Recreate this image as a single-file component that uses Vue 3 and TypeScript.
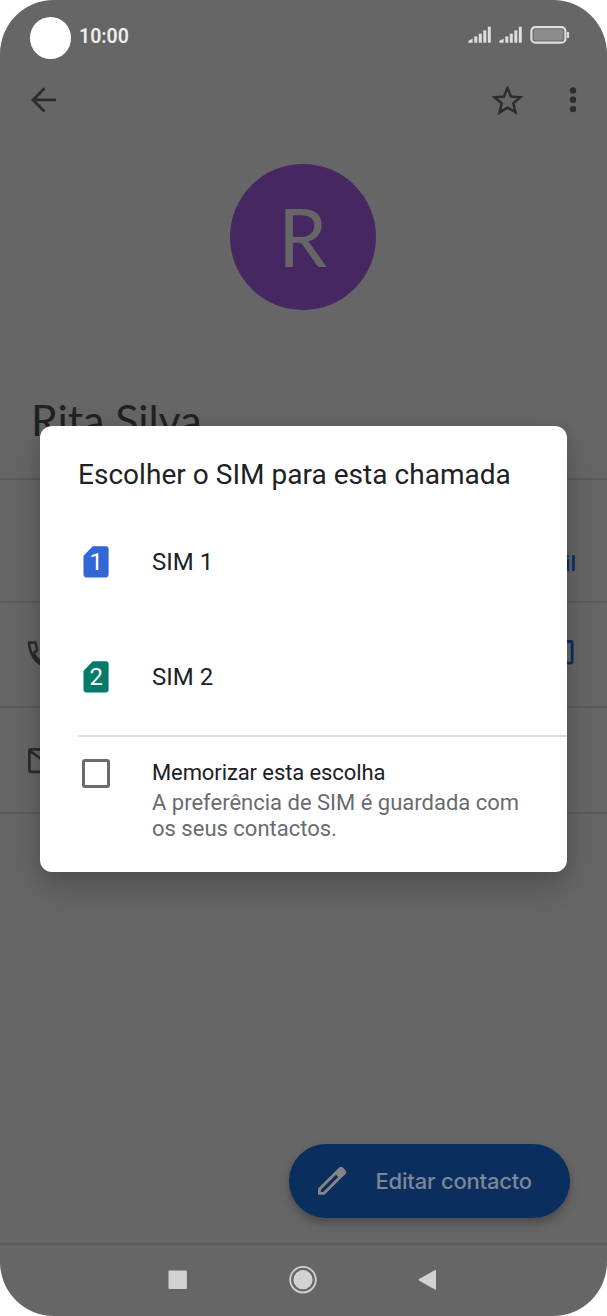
<script setup lang="ts">
interface SimOption {
  id: number
  color: string
}

const sims: SimOption[] = [
  { id: 1, color: '#3267d6' },
  { id: 2, color: '#047b69' },
]
const signalBars: number[] = [3.5, 6.3, 9, 12.3, 16]
</script>

<template>
  <div class="phone">
    <header class="status">
      <span class="camera"></span>
      <span class="clock">10:00</span>
      <svg v-for="n in 2" :key="n" class="signal" width="24" height="17" viewBox="0 0 24 17">
        <path d="M0.3 16.7V15L4.6 12.6V16.7Z" />
        <rect v-for="(h, i) in signalBars.slice(1)" :key="i" :x="6.3 + i * 4.5" :y="16.7 - h" width="3" :height="h" />
      </svg>
      <svg class="battery" width="40" height="18" viewBox="0 0 40 18">
        <rect x="1.4" y="1.1" width="34" height="15.6" rx="4" fill="none" stroke="#dedede" stroke-width="2.2" />
        <rect x="3.7" y="3.3" width="29.5" height="11.2" rx="1.5" fill="#8c8c8c" />
        <path d="M37 6h1.2q.9 0 .9 1v4q0 1-.9 1H37z" fill="#dedede" />
      </svg>
    </header>

    <nav class="appbar">
      <svg class="back" width="26" height="26" viewBox="0 0 26 26">
        <path d="M25 12.9H2M13.5 1.3L2 12.9L13.5 24.5" fill="none" stroke="#2b2c2d" stroke-width="2.8" />
      </svg>
      <svg class="star" width="31" height="30" viewBox="0 0 31 30">
        <path d="M15.5 1.9L19 10.5L28.4 11.3L21.3 17.4L23.5 26.4L15.5 21.6L7.5 26.4L9.7 17.4L2.6 11.3L12 10.5Z" fill="none" stroke="#2b2c2d" stroke-width="2.5" />
      </svg>
      <svg class="more" width="8" height="26" viewBox="0 0 8 26">
        <circle cx="4" cy="3.5" r="3.2" /><circle cx="4" cy="12.8" r="3.2" /><circle cx="4" cy="22.1" r="3.2" />
      </svg>
    </nav>

    <main class="contact">
      <div class="avatar"><span>R</span></div>
      <h1 class="name">Rita Silva</h1>
      <section class="actions"><span>E-mail</span></section>
      <section class="row phone-row">
        <svg width="30" height="30" viewBox="0 0 30 30">
          <path d="M1.8 2.5H8.5L10.2 10L6.6 13.4Q10 20 16.8 23.4L20.4 19.8L27.5 21.5V28Q4.5 27 1.8 2.5ZM6.6 13.4L10 10M16.8 23.4L20.4 19.8" fill="none" stroke="#2b2c2d" stroke-width="2.5" stroke-linejoin="round" />
        </svg>
        <svg width="28" height="25" viewBox="0 0 28 25">
          <rect x="1.5" y="1.5" width="24.7" height="21.6" rx="1.8" fill="none" stroke="#0d2f61" stroke-width="2.8" />
        </svg>
      </section>
      <section class="row mail-row">
        <svg width="31" height="26" viewBox="0 0 31 26">
          <path d="M1.4 2.6Q1.4 1.4 2.6 1.4H28Q29.2 1.4 29.2 2.6V22.6Q29.2 23.8 28 23.8H2.6Q1.4 23.8 1.4 22.6ZM2 3L15.3 12.5L28.6 3" fill="none" stroke="#2b2c2d" stroke-width="2.7" />
        </svg>
      </section>
      <button class="edit" type="button">
        <svg width="30" height="30" viewBox="0 0 30 30">
          <path fill-rule="evenodd" d="M1 22.6L22.2 1.5Q24 .1 25.8 1.5L28.7 4.4Q30 6.1 28.7 7.7L7.5 28.8H1ZM3.9 23.8V26H6.1L21.2 10.9L19 8.7Z" />
        </svg>
        <span>Editar contacto</span>
      </button>
    </main>

    <footer class="navbar">
      <svg width="270" height="28" viewBox="0 0 270 28">
        <rect x=".5" y="4.5" width="18.4" height="18.5" rx="1" />
        <circle cx="135" cy="13.7" r="12.8" fill="none" stroke="#d2d2d2" stroke-width="1.8" />
        <circle cx="135" cy="13.7" r="9.6" />
        <path d="M251 13.1L266.8 4.2Q268 3.7 268 5V22.8Q268 24.1 266.8 23.4L251 14.5Q250.2 13.8 251 13.1Z" />
      </svg>
    </footer>

    <div class="dialog" role="dialog">
      <h2>Escolher o SIM para esta chamada</h2>
      <div v-for="sim in sims" :key="sim.id" class="sim">
        <svg width="26" height="32" viewBox="0 0 26 32">
          <path d="M9.8 .3H22.9Q25.6 .3 25.6 3V28.6Q25.6 31.4 22.9 31.4H3.3Q.5 31.4 .5 28.6V9.8Z" :fill="sim.color" />
          <text x="13.3" y="24.4" text-anchor="middle">{{ sim.id }}</text>
        </svg>
        <span>SIM {{ sim.id }}</span>
      </div>
      <div class="remember">
        <span class="checkbox"></span>
        <div>
          <p class="choice">Memorizar esta escolha</p>
          <p class="hint">A preferência de SIM é guardada com<br />os seus contactos.</p>
        </div>
      </div>
    </div>
  </div>
</template>

<style>
body { margin: 0; background: #fff; }
</style>

<style scoped>
* { box-sizing: border-box; }
.phone {
  position: relative;
  display: flex;
  flex-direction: column;
  width: 607px;
  height: 1316px;
  overflow: hidden;
  border-radius: 54px;
  background: #666;
  font-family: Roboto, "Liberation Sans", sans-serif;
}
h1, h2, p { margin: 0; font-weight: 400; }
svg { display: block; flex: none; }
.status { display: flex; height: 76px; padding: 17px 37px 0 30px; }
.camera { width: 41px; height: 41.5px; border-radius: 50%; background: #fff; }
.clock { margin: 8px auto 0 8px; color: #eee; font-size: 19.5px; line-height: 24px; font-weight: 600; }
.signal { margin: 9px 6.5px 0 0; fill: #dedede; }
.battery { margin: 8.5px 0 0 1px; }
.appbar { display: flex; height: 87.5px; padding: 10px 30.5px 0 31px; }
.back { margin: 1px auto 0 0; }
.more { margin: 1px 0 0 46px; fill: #2b2c2d; }
.contact { display: flex; flex-direction: column; height: 1079.5px; }
.avatar { display: flex; justify-content: center; width: 146px; height: 146.5px; margin-left: 230px; border-radius: 50%; background: #472761; }
.avatar span { color: #666; font-family: Lato, sans-serif; font-size: 82px; line-height: 142px; transform: scaleX(.95); }
.name { height: 168px; padding: 84px 0 0 31px; color: #202122; font-family: Lato, sans-serif; font-size: 43px; line-height: 52px; letter-spacing: -.1px; white-space: nowrap; }
.actions { height: 125px; border-top: 2px solid #5b5b5b; border-bottom: 2px solid #5b5b5b; padding: 70px 31px 0 0; text-align: right; color: #0d2f61; font-size: 22px; line-height: 28px; font-weight: 500; }
.row { display: flex; justify-content: space-between; height: 105.4px; border-bottom: 2px solid #5b5b5b; }
.phone-row { padding: 36.5px 33px 0 27px; }
.mail-row { padding: 39.5px 28px 0 27.5px; }
.edit {
  display: flex; align-items: center; width: 281px; height: 74px; margin: auto 37px 25px auto; padding: 0 0 0 28px;
  border: 0; border-radius: 37px; background: #0a2e5e; color: #7d8795; box-shadow: 0 5px 10px rgba(0, 0, 0, .28);
  font-family: Inter, sans-serif; font-size: 22px; font-weight: 500; line-height: 28px; letter-spacing: -.2px;
}
.edit svg { margin-right: 28.5px; fill: #858585; }
.navbar { height: 73px; padding: 21px 0 0 168px; border-top: 2px solid #5b5b5b; fill: #d2d2d2; }
.dialog { position: absolute; left: 40px; top: 426px; width: 526.5px; height: 446px; padding: 29px 0 0 38px; border-radius: 12px; background: #fff; box-shadow: 0 16px 34px rgba(0, 0, 0, .2), 0 2px 12px rgba(0, 0, 0, .1); }
h2 { margin-bottom: 9.5px; color: #202124; font-size: 28px; line-height: 40px; letter-spacing: .03px; white-space: nowrap; }
.sim { display: flex; align-items: center; height: 115px; padding-left: 5px; color: #202124; font-size: 24px; }
.sim svg { margin-right: 43px; }
.sim text { fill: #fff; font-size: 24px; }
.remember { display: flex; gap: 42px; padding: 22px 0 0 3.5px; border-top: 2px solid #dadada; font-size: 22px; white-space: nowrap; }
.checkbox { flex: none; width: 28.5px; height: 28.5px; border: 3px solid #6a6b70; border-radius: 3px; margin-top: .5px; }
.choice { color: #202124; line-height: 28px; letter-spacing: -.1px; }
.hint { margin-top: 3px; color: #686b70; line-height: 26px; }
</style>
